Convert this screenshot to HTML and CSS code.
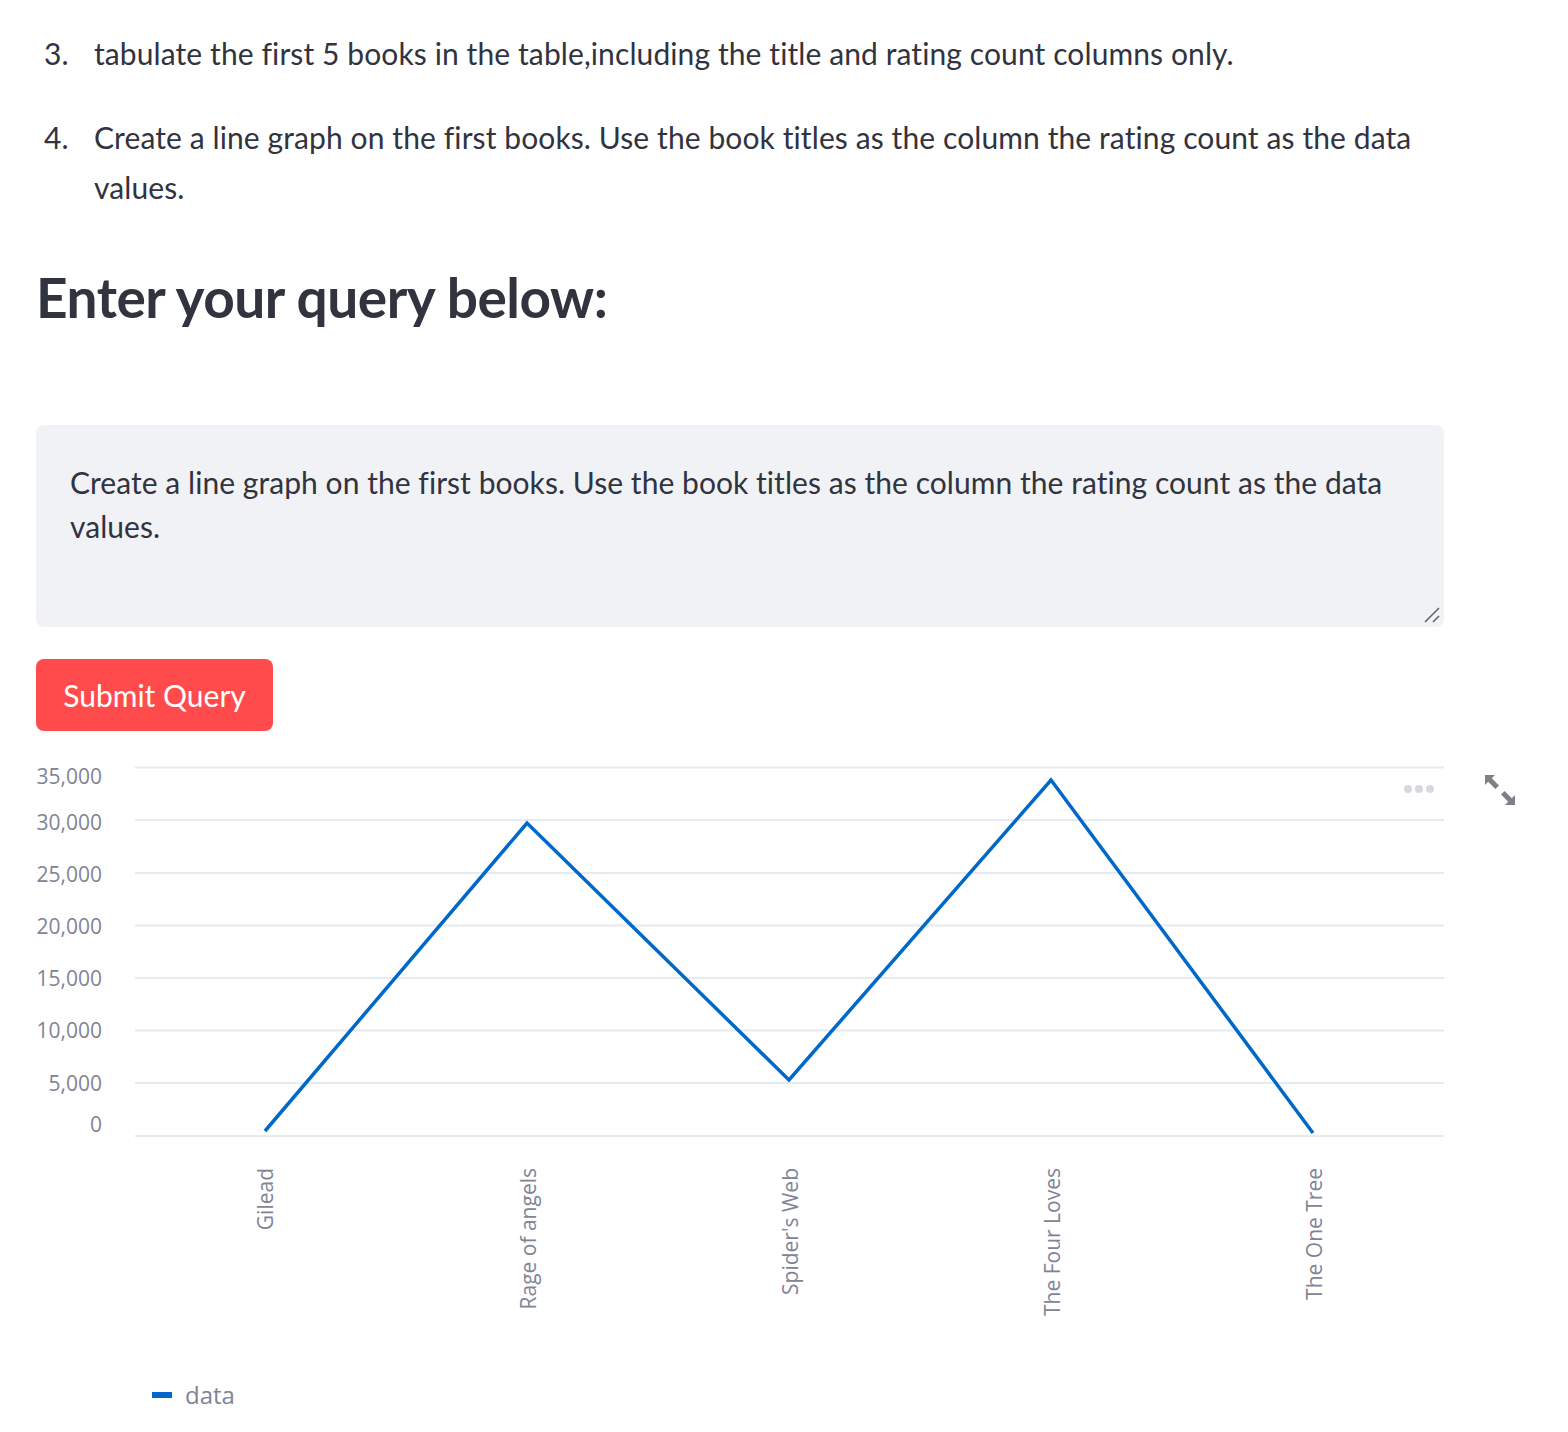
FILE: index.html
```html
<!DOCTYPE html>
<html lang="en">
<head>
<meta charset="utf-8">
<title>Query</title>
<link rel="stylesheet" href="styles.css">
</head>
<body>
<div class="main">
  <ol class="steps">
    <li><span class="num">3.</span><span class="txt">tabulate the first 5 books in the table,including the title and rating count columns only.</span></li>
    <li><span class="num">4.</span><span class="txt">Create a line graph on the first books. Use the book titles as the column the rating count as the data values.</span></li>
  </ol>
  <h2 class="heading">Enter your query below:</h2>
  <div class="query-wrap">
    <textarea class="query">Create a line graph on the first books. Use the book titles as the column the rating count as the data values.</textarea>
    <svg class="resizer" width="16" height="16" viewBox="0 0 16 16" xmlns="http://www.w3.org/2000/svg">
      <line x1="1" y1="15" x2="15" y2="1" stroke="#5a5a5a" stroke-width="1.4"/>
      <line x1="9" y1="15" x2="15" y2="9" stroke="#5a5a5a" stroke-width="1.4"/>
    </svg>
  </div>
  <button class="submit">Submit Query</button>
  <div class="chart">
    <svg class="plot" width="1408" height="580" viewBox="36 755 1408 580" xmlns="http://www.w3.org/2000/svg">
      <g stroke="#e6eaf1" stroke-width="2">
        <line x1="135" x2="1444" y1="767.5" y2="767.5"/>
        <line x1="135" x2="1444" y1="820" y2="820"/>
        <line x1="135" x2="1444" y1="873" y2="873"/>
        <line x1="135" x2="1444" y1="925.5" y2="925.5"/>
        <line x1="135" x2="1444" y1="978" y2="978"/>
        <line x1="135" x2="1444" y1="1030.5" y2="1030.5"/>
        <line x1="135" x2="1444" y1="1083" y2="1083"/>
        <line x1="135" x2="1444" y1="1136" y2="1136"/>
      </g>
      <g class="ylab" text-anchor="end" dominant-baseline="central">
        <text x="102" y="776">35,000</text>
        <text x="102" y="822">30,000</text>
        <text x="102" y="874">25,000</text>
        <text x="102" y="926">20,000</text>
        <text x="102" y="978">15,000</text>
        <text x="102" y="1030">10,000</text>
        <text x="102" y="1083">5,000</text>
        <text x="102" y="1124">0</text>
      </g>
      <polyline points="265,1131 527,823 789,1080 1051,780 1313,1133" fill="none" stroke="#0068c9" stroke-width="3.5" stroke-linejoin="miter"/>
      <g class="xlab" text-anchor="end" dominant-baseline="central">
        <text transform="translate(265 1168) rotate(-90)">Gilead</text>
        <text transform="translate(528 1168) rotate(-90)">Rage of angels</text>
        <text transform="translate(790 1168) rotate(-90)">Spider's Web</text>
        <text transform="translate(1052 1168) rotate(-90)">The Four Loves</text>
        <text transform="translate(1314 1168) rotate(-90)">The One Tree</text>
      </g>
    </svg>
    <div class="legend"><span class="swatch"></span><span class="legend-label">data</span></div>
    <div class="menu-dots"><span></span><span></span><span></span></div>
    <svg class="expand" width="30" height="30" viewBox="0 0 30 30" xmlns="http://www.w3.org/2000/svg">
      <path d="M0 0 H10 L6.8 3.2 L14 10.4 L10.4 14 L3.2 6.8 L0 10 Z" fill="#7f8088"/>
      <path d="M30 30 H20 L23.2 26.8 L16 19.6 L19.6 16 L26.8 23.2 L30 20 Z" fill="#7f8088"/>
    </svg>
  </div>
</div>
</body>
</html>
```

FILE: styles.css
```css
html, body {
  margin: 0;
  padding: 0;
  background: #ffffff;
}

body {
  font-family: "Lato", "Noto Sans", "Liberation Sans", sans-serif;
  color: #31333f;
}

.main {
  display: flex;
  flex-direction: column;
  align-items: flex-start;
  width: 1408px;
  padding: 28px 0 0 36px;
}

.steps {
  list-style: none;
  margin: 0;
  padding: 0;
  width: 1408px;
  font-size: 30px;
  line-height: 50px;
  letter-spacing: 0.1px;
}

.steps li {
  display: flex;
}

.steps li + li {
  margin-top: 34px;
}

.num {
  flex: 0 0 58px;
  box-sizing: border-box;
  padding-left: 8px;
}

.txt {
  flex: 1 1 auto;
}

.heading {
  margin: 52px 0 0 0;
  font-size: 55px;
  line-height: 67px;
  font-weight: 700;
  color: #31333f;
  letter-spacing: -0.5px;
}

.query-wrap {
  position: relative;
  margin-top: 94px;
  width: 1408px;
  height: 202px;
}

.query {
  display: block;
  width: 1408px;
  height: 202px;
  box-sizing: border-box;
  padding: 35px 34px 0 34px;
  border: none;
  border-radius: 8px;
  background: #f0f2f6;
  font-family: inherit;
  font-size: 30px;
  line-height: 44px;
  letter-spacing: 0.05px;
  color: #31333f;
  resize: none;
  outline: none;
  overflow: hidden;
}

.resizer {
  position: absolute;
  right: 4px;
  bottom: 4px;
}

.submit {
  margin-top: 32px;
  height: 72px;
  width: 237px;
  border: none;
  border-radius: 8px;
  background: #ff4b4b;
  color: #ffffff;
  font-family: inherit;
  font-size: 30px;
  padding: 0;
}

.chart {
  position: relative;
  margin-top: 24px;
  width: 1408px;
}

.plot {
  display: block;
}

.ylab text,
.xlab text {
  font-family: "Open Sans", "Noto Sans", sans-serif;
  font-size: 21px;
  fill: #808495;
}

.legend {
  display: flex;
  align-items: center;
  gap: 13px;
  margin-top: 45px;
  padding-left: 116px;
  height: 30px;
}

.swatch {
  display: block;
  width: 20px;
  height: 6px;
  background: #0068c9;
}

.legend-label {
  font-family: "Open Sans", "Noto Sans", sans-serif;
  font-size: 24px;
  color: #808495;
  line-height: 30px;
}

.menu-dots {
  position: absolute;
  left: 1368px;
  top: 30px;
  display: flex;
  gap: 3px;
}

.menu-dots span {
  display: block;
  width: 8px;
  height: 8px;
  border-radius: 50%;
  background: #d5d8de;
}

.expand {
  position: absolute;
  left: 1449px;
  top: 20px;
}
```
